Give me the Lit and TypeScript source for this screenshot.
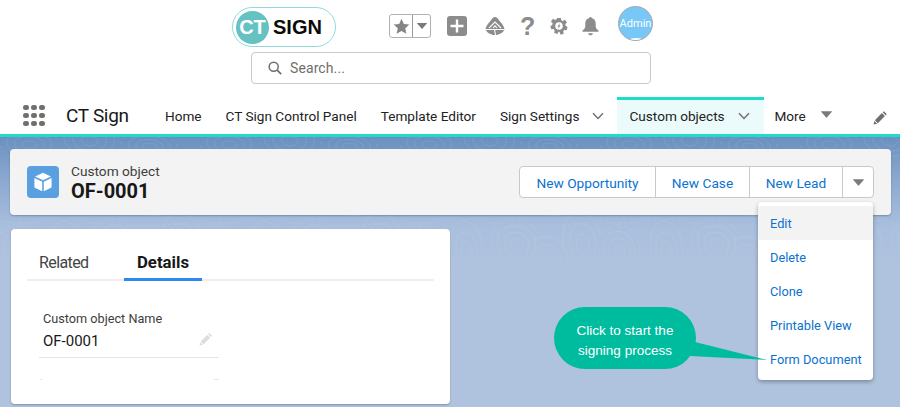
import { LitElement, html, css, svg } from "lit";
import { customElement } from "lit/decorators.js";

const chevron = html`<svg class="chev" viewBox="0 0 12 8" width="12" height="8"><path d="M1 1.200 6 6.400 11 1.200" fill="none" stroke="#706e6b" stroke-width="1.400"/></svg>`;
const tri = (w: number, h: number) => html`<svg class="tri" viewBox="0 0 10 6" width=${w} height=${h}><path d="M0.300 0h9.400a.3.3 0 0 1 .2.5L5.300 5.800a.4.4 0 0 1-.6 0L.1.5A.3.3 0 0 1 .3 0z" fill="#7b7b7b"/></svg>`;
const pencil = (c: string, s: number) => html`<svg class="pen" viewBox="0 0 16 16" width=${s} height=${s}><path d="M11.600 1.200 14.800 4.400 13.500 5.700 10.300 2.500zM9.500 3.300 12.700 6.500 5.200 14 2 10.800zM1.400 11.600 4.400 14.600.6 15.500z" fill=${c}/></svg>`;

/* One wobbly closed contour, drawn as concentric rings at each spot. */
const WOBBLE = "M-1 -.8C-.5 -1.200 .4 -1.100 .8 -.7S1.200 .1 .9 .6 .1 1.200 -.5 .9 -1.400 -.3 -1 -.8z";
const rings = (x: number, y: number, rx: number, ry: number, n: number) =>
  Array.from({ length: n }, (_, i) => {
    const k = 1 - i / n;
    return svg`<path d=${WOBBLE} vector-effect="non-scaling-stroke" stroke-dasharray=${i === 0 && n > 3 ? "3 3" : "none"} transform="translate(${x} ${y}) scale(${rx * k} ${ry * k})"/>`;
  });
const contours = svg`
  <g fill="none" stroke="#fff" stroke-width="1">
    ${rings(67, 116, 14, 30, 3)}
    ${rings(117, 108, 22, 24, 4)}
    ${rings(148, 123, 18, 22, 3)}
    ${rings(183, 108, 17, 30, 3)}
    ${rings(20, 115, 18, 26, 4)}
    ${rings(30, 8, 26, 16, 4)}
    ${rings(90, 4, 22, 14, 3)}
    ${rings(150, 10, 24, 14, 4)}
    ${rings(60, 50, 26, 24, 3)}
    ${rings(150, 55, 24, 22, 3)}
    <path d="M0 84c30 6 50-4 80 0s70 8 120 0" stroke-dasharray="3 3"/>
  </g>`;

@customElement("app-root")
export class AppRoot extends LitElement {
  static styles = css`
    :host { display: block; width: 900px; height: 407px; overflow: hidden; position: relative;
      font-family: "Roboto", "Liberation Sans", sans-serif; color: #181818; }
    * { box-sizing: border-box; }
    svg { flex: none; }
    header { height: 137px; background: #fff; border-bottom: 3px solid #1ddcc8; display: flex; flex-direction: column; }
    .top { display: flex; align-items: flex-start; padding: 6px 0 0 232px; height: 52px; }
    .logo { width: 104px; height: 40px; margin-top: 1px; border: 1px solid #93d8da; border-radius: 20px; display: flex; align-items: center; padding-left: 3px; font-family: "Liberation Sans", sans-serif; font-weight: 700; }
    .logo .ct { width: 33px; height: 33px; border-radius: 50%; background: #66c1c3; color: #fff; font-size: 20px; display: flex; align-items: center; justify-content: center; }
    .logo .sign { color: #0b0b0b; font-size: 20px; margin-left: 4px; }
    .fav { margin: 8px 0 0 53px; width: 42px; height: 24px; border: 1px solid #b0b0b0; border-radius: 3px; display: flex; align-items: center; }
    .fav span { display: flex; align-items: center; justify-content: center; height: 100%; }
    .fav .s { width: 23px; border-right: 1px solid #9a9a9a; }
    .fav .d { flex: 1; }
    .ic { display: flex; align-items: center; justify-content: center; }
    .plus { margin: 10px 0 0 16px; }
    .trail { margin: 10px 0 0 18px; }
    .help { margin: 7px 0 0 15px; width: 15px; font-family: "Liberation Sans", sans-serif; font-weight: 700; font-size: 25px; line-height: 26px; color: #8c8c8c; }
    .gear { margin: 11px 0 0 15px; }
    .bell { margin: 10px 0 0 13px; }
    .avatar { margin: 0 0 0 18px; width: 35px; height: 35px; border-radius: 50%; background: #78c7f6; border: 1.500px solid #a5a9ad; color: #fff; font-size: 11px; display: flex; align-items: center; justify-content: center; position: relative; overflow: hidden; }
    .avatar::after { content: ""; position: absolute; left: 8px; right: 7px; bottom: -4px; height: 6px; background: #fff; border-radius: 50%; }
    .search { margin: 0 0 0 251px; width: 400px; height: 32px; border: 1px solid #c9c9c9; border-radius: 4px; display: flex; align-items: center; padding-left: 16px; gap: 8px; color: #706e6b; font-size: 14px; letter-spacing: .1px; }
    nav { margin-top: 13px; height: 37px; display: flex; align-items: stretch; padding-left: 23px; }
    .waffle { flex: none; display: grid; grid-template-columns: repeat(3, 5.500px); gap: 2.500px; align-content: center; width: 43px; }
    .waffle i { width: 5.500px; height: 5.500px; border-radius: 50%; background: #706e6b; }
    .app { flex: none; font-size: 19px; letter-spacing: -.3px; font-weight: 400; display: flex; align-items: center; width: 87px; white-space: nowrap; }
    .item { flex: none; display: flex; align-items: center; padding: 1px 12px 0; font-size: 13.600px; white-space: nowrap; color: #222; }
    .item .chev { margin-left: 13px; }
    .item.sel { background: #ebfafa; border-top: 3px solid #1ddcc8; padding: 0 12px 2px; width: 147px; margin-left: 1px; }
    .item.more { padding-left: 10px; }
    .item.more .tri { margin-left: 15px; margin-top: -3px; }
    .edit { margin-left: auto; margin-right: 12px; display: flex; align-items: center; padding-top: 3px; }

    main { position: relative; height: 270px; background: linear-gradient(180deg, #6a90bf 0, #8aa7cf 40px, #a9bfdd 90px, #b0c3de 130px); padding: 12px 9px 0 10px; }
    .topo { position: absolute; left: 0; top: 0; width: 900px; height: 140px; opacity: .09; -webkit-mask-image: linear-gradient(180deg, #000 70%, transparent 98%); mask-image: linear-gradient(180deg, #000 70%, transparent 98%); }
    .hl { position: relative; height: 66px; background: #f3f3f3; border-radius: 4px; box-shadow: 0 1px 2px rgba(0,0,0,.25); display: flex; align-items: center; padding: 0 17px; }
    .obj { width: 32px; height: 32px; border-radius: 4px; background: #5a9fe0; display: flex; align-items: center; justify-content: center; margin-right: 12px; }
    .titles { display: flex; flex-direction: column; padding-top: 1px; }
    .titles small { font-size: 13.700px; line-height: 16px; color: #3e3e3c; }
    .titles b { font-size: 20px; line-height: 24px; font-weight: 700; color: #181818; }
    .btns { margin-left: auto; display: flex; height: 32px; border: 1px solid #c9c9c9; border-radius: 4px; background: #fff; }
    .btns span { display: flex; align-items: center; justify-content: center; color: #0b72d0; font-size: 13.700px; padding-top: 2px; border-right: 1px solid #c9c9c9; white-space: nowrap; }
    .btns span:last-child { border-right: 0; padding-top: 0; }
    .b1 { width: 136px; } .b2 { width: 94px; } .b3 { width: 93px; } .b4 { width: 30px; }
    .card { position: relative; margin: 14px 0 0 1px; width: 439px; height: 175px; background: #fff; border-radius: 4px; box-shadow: 0 1px 2px rgba(0,0,0,.25); padding: 0 16px; }
    .tabs { display: flex; height: 52px; border-bottom: 2px solid #eeeeee; }
    .tabs span { display: flex; align-items: center; padding-top: 17px; }
    .t1 { width: 97px; font-size: 16px; color: #444; letter-spacing: -.6px; padding-left: 12px; }
    .t2 { width: 78px; font-size: 16.800px; justify-content: center; font-weight: 700; color: #181818; height: 52px; border-bottom: 3px solid #2f88ee; margin-bottom: -2px; }
    .field { margin: 29px 0 0 12px; width: 180px; border-bottom: 1px solid #e4e4e4; height: 48px; padding: 0 4px; position: relative; }
    .field label { display: block; font-size: 12.700px; line-height: 18px; color: #3e3e3c; }
    .field div { font-size: 15px; line-height: 26px; color: #181818; display: flex; justify-content: space-between; align-items: center; padding-right: 2px; }
    .field .pen { margin-top: -5px; }
    .stub { margin: 21px 0 0 13px; width: 179px; height: 1px; display: flex; justify-content: space-between; }
    .stub i { height: 1px; background: #e8e8e8; width: 2px; } .stub i:last-child { width: 5px; }

    .menu { position: absolute; left: 758px; top: 65px; width: 115px; height: 178px; background: #fff; border-radius: 4px; box-shadow: 0 2px 4px rgba(0,0,0,.3); padding-top: 4px; }
    .menu div { height: 34px; display: flex; align-items: center; padding-left: 12px; color: #0b72d0; font-size: 12.800px; white-space: nowrap; }
    .menu div:first-child { background: #f3f3f3; }
    .tail { position: absolute; left: 690px; top: 205px; }
    .bubble { position: absolute; left: 554px; top: 170px; width: 142px; height: 62px; border-radius: 31px; background: #00bc9f; color: #fff; font-family: "Liberation Sans", sans-serif; font-size: 13.500px; line-height: 20px; text-align: center; display: flex; align-items: center; justify-content: center; padding-top: 5px; }
  `;

  render() {
    return html`
      <header>
        <div class="top">
          <div class="logo"><span class="ct">CT</span><span class="sign">SIGN</span></div>
          <div class="fav">
            <span class="s"><svg viewBox="0 0 16 16" width="17" height="17"><path d="M8 .8l2.200 4.800 5.200.6-3.900 3.500 1.100 5.200L8 12.200l-4.600 2.700 1.100-5.200L.6 6.200l5.200-.6z" fill="#858585"/></svg></span>
            <span class="d">${tri(10, 6)}</span>
          </div>
          <div class="plus ic"><svg viewBox="0 0 20 20" width="20" height="20"><rect width="20" height="20" rx="3" fill="#8c8c8c"/><path d="M10 3.500v13M3.500 10h13" stroke="#fff" stroke-width="2.400"/></svg></div>
          <div class="trail ic"><svg viewBox="0 0 20 20" width="20" height="20"><path d="M10 1c2 0 3 2 5 4.500s4 4.500 4.500 7.500c-1 3.500-5 6-9.500 6S1.500 16.500.5 13C1 10 3 8 5 5.500S8 1 10 1z" fill="#8c8c8c"/><path d="M4 12 10 6l6 6M8 12l2-2.200 2 2.200M.5 13.500h19M9.500 13.500l1 5.500" fill="none" stroke="#fff" stroke-width="1.100"/></svg></div>
          <div class="help">?</div>
          <div class="gear ic"><svg viewBox="0 0 20 20" width="18" height="18"><path d="M8 1h4l.6 2.600 1.700.8 2.300-1.400 2.300 3-1.900 1.900.3 1.900 2.200 1.200-1 3.600-2.600-.2-1.200 1.500.6 2.600-3.500 1.300L10.500 16.500h-1L8.100 18.800 4.600 17.500l.6-2.600L4 13.400l-2.600.2-1-3.600 2.200-1.200.3-1.900L1 5l2.300-3 2.300 1.400 1.700-.8z" fill="#8c8c8c"/><circle cx="10" cy="10" r="4.200" fill="#fff"/><path d="M11 6.800 8.300 10.500h1.500L9 13.200l2.700-3.700h-1.500z" fill="#8c8c8c"/></svg></div>
          <div class="bell ic"><svg viewBox="0 0 20 20" width="19" height="20"><circle cx="10" cy="2" r="1.600" fill="#8c8c8c"/><path d="M10 1.500c3.500 0 5.500 2.500 5.500 6v3c0 2 1.500 3 3 4.500v1H1.500v-1c1.500-1.500 3-2.500 3-4.500v-3c0-3.500 2-6 5.500-6z" fill="#8c8c8c"/><path d="M7.500 17.500h5c0 1.300-1.100 2.200-2.500 2.200s-2.500-.9-2.500-2.200z" fill="#8c8c8c"/></svg></div>
          <div class="avatar">Admin</div>
        </div>
        <div class="search">
          <svg viewBox="0 0 16 16" width="14" height="14"><circle cx="6.500" cy="6.500" r="5.200" fill="none" stroke="#706e6b" stroke-width="1.700"/><path d="M10.500 10.500 15 15" stroke="#706e6b" stroke-width="1.900"/></svg>
          Search...
        </div>
        <nav>
          <div class="waffle">${Array.from({ length: 9 }, () => html`<i></i>`)}</div>
          <div class="app">CT Sign</div>
          <div class="item">Home</div>
          <div class="item">CT Sign Control Panel</div>
          <div class="item">Template Editor</div>
          <div class="item">Sign Settings ${chevron}</div>
          <div class="item sel">Custom objects ${chevron}</div>
          <div class="item more">More ${tri(11, 7)}</div>
          <div class="edit">${pencil("#706e6b", 15)}</div>
        </nav>
      </header>
      <main>
        <svg class="topo" aria-hidden="true"><defs><pattern id="p" width="200" height="140" patternUnits="userSpaceOnUse">${contours}</pattern></defs><rect width="900" height="140" fill="url(#p)"/></svg>
        <section class="hl">
          <div class="obj"><svg viewBox="0 0 20 20" width="22" height="22"><path d="M10 1.500 17.200 5 10 8.500 2.800 5z" fill="#fff"/><path d="M2.200 6.300 9.300 9.800v8.700L2.200 15zM17.800 6.300 10.700 9.800v8.700l7.100-3.500z" fill="#fff"/></svg></div>
          <div class="titles"><small>Custom object</small><b>OF-0001</b></div>
          <div class="btns">
            <span class="b1">New Opportunity</span><span class="b2">New Case</span><span class="b3">New Lead</span><span class="b4">${tri(11, 7)}</span>
          </div>
        </section>
        <section class="card">
          <div class="tabs"><span class="t1">Related</span><span class="t2">Details</span></div>
          <div class="field">
            <label>Custom object Name</label>
            <div>OF-0001 ${pencil("#dcdcdc", 14)}</div>
          </div>
          <div class="stub"><i></i><i></i></div>
        </section>
        <div class="menu">
          <div>Edit</div><div>Delete</div><div>Clone</div><div>Printable View</div><div>Form Document</div>
        </div>
        <svg class="tail" width="80" height="30" viewBox="0 0 80 30" aria-hidden="true"><path d="M5 0 77 18 0 14z" fill="#00bc9f"/></svg>
        <div class="bubble"><span>Click to start the<br>signing process</span></div>
      </main>
    `;
  }
}
